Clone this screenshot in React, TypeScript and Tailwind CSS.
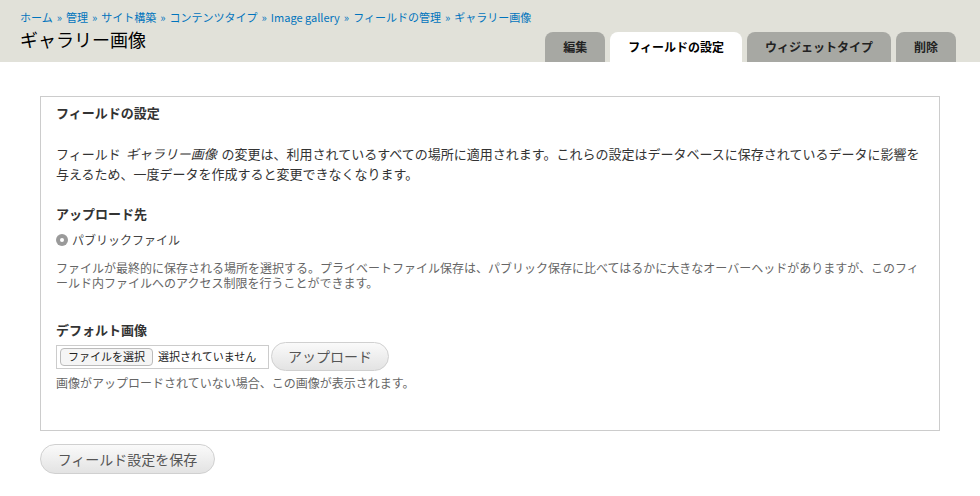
import React from 'react';

const FONT = '"Noto Sans CJK JP", "Noto Sans", "Liberation Sans", sans-serif';

const crumbs = ['ホーム', '管理', 'サイト構築', 'コンテンツタイプ', 'Image gallery', 'フィールドの管理', 'ギャラリー画像'];

const tabs = [
  { label: '編集', active: false },
  { label: 'フィールドの設定', active: true },
  { label: 'ウィジェットタイプ', active: false },
  { label: '削除', active: false },
];

const App: React.FC = () => {
  return (
    <div className="min-h-[496px] bg-white text-[#333]" style={{ fontFamily: FONT }}>
      {/* Header */}
      <div className="h-[62px] bg-[#e1e1d9] pl-5 pr-6 pt-[9px] flex flex-col">
        <div className="flex items-center text-[11px] leading-[16px] text-[#0074bd]">
          {crumbs.map((c, i) => (
            <React.Fragment key={c}>
              {i > 0 && <span className="px-[4px] text-[#0074bd]">»</span>}
              <a href="#" className="hover:underline">{c}</a>
            </React.Fragment>
          ))}
        </div>
        <div className="flex-1 flex justify-between">
          <h1 className="mt-[3px] text-[18px] leading-[22px] font-normal text-black self-start">ギャラリー画像</h1>
          <ul className="flex gap-[5px] self-end">
            {tabs.map(t => (
              <li
                key={t.label}
                className={`h-[30px] px-[18px] rounded-t-[8px] flex items-center text-[12px] font-bold ${
                  t.active ? 'bg-white text-black' : 'bg-[#a7a8a3] text-[#222]'
                }`}
              >
                {t.label}
              </li>
            ))}
          </ul>
        </div>
      </div>

      {/* Content */}
      <div className="px-10 pt-[34px]">
        <div className="border border-[#ccc] pt-[6px] px-[15px] pb-[40px]">
          <h2 className="text-[13px] leading-[20px] font-bold">フィールドの設定</h2>
          <p className="mt-[21px] text-[13px] leading-[20px]">
            フィールド <em className="mx-[2px]">ギャラリー画像</em> の変更は、利用されているすべての場所に適用されます。これらの設定はデータベースに保存されているデータに影響を与えるため、一度データを作成すると変更できなくなります。
          </p>

          <h3 className="mt-[20px] text-[13px] leading-[20px] font-bold">アップロード先</h3>
          <label className="mt-[6px] flex items-center gap-[4px] text-[12px] leading-[20px] text-[#444]">
            <span className="w-[12px] h-[12px] rounded-full bg-[#9a9a9a] flex items-center justify-center">
              <span className="w-[4px] h-[4px] rounded-full bg-white" />
            </span>
            パブリックファイル
          </label>
          <p className="mt-[10px] text-[12px] leading-[15px] text-[#666]">
            ファイルが最終的に保存される場所を選択する。プライベートファイル保存は、パブリック保存に比べてはるかに大きなオーバーヘッドがありますが、このフィールド内ファイルへのアクセス制限を行うことができます。
          </p>

          <h3 className="mt-[30px] text-[13px] leading-[20px] font-bold">デフォルト画像</h3>
          <div className="mt-[2px] flex items-center gap-[2px]">
            <div className="w-[213px] h-[24px] border border-[#ccc] flex items-center pl-[3px] gap-[5px] text-[11px] text-[#222]">
              <span className="h-[18px] px-[7px] border border-[#bbb] rounded-[4px] bg-[#f5f5f5] flex items-center">
                ファイルを選択
              </span>
              <span>選択されていません</span>
            </div>
            <button className="w-[118px] h-[29px] rounded-full border border-[#d0d0d0] bg-gradient-to-b from-[#fafafa] to-[#e3e3e3] text-[14px] text-[#555]">
              アップロード
            </button>
          </div>
          <p className="mt-[4px] text-[12px] leading-[15px] text-[#666]">
            画像がアップロードされていない場合、この画像が表示されます。
          </p>
        </div>

        <button className="mt-[13px] w-[175px] h-[30px] rounded-full border border-[#d0d0d0] bg-gradient-to-b from-[#fafafa] to-[#e3e3e3] text-[14px] text-[#555]">
          フィールド設定を保存
        </button>
      </div>
    </div>
  );
};

export default App;
